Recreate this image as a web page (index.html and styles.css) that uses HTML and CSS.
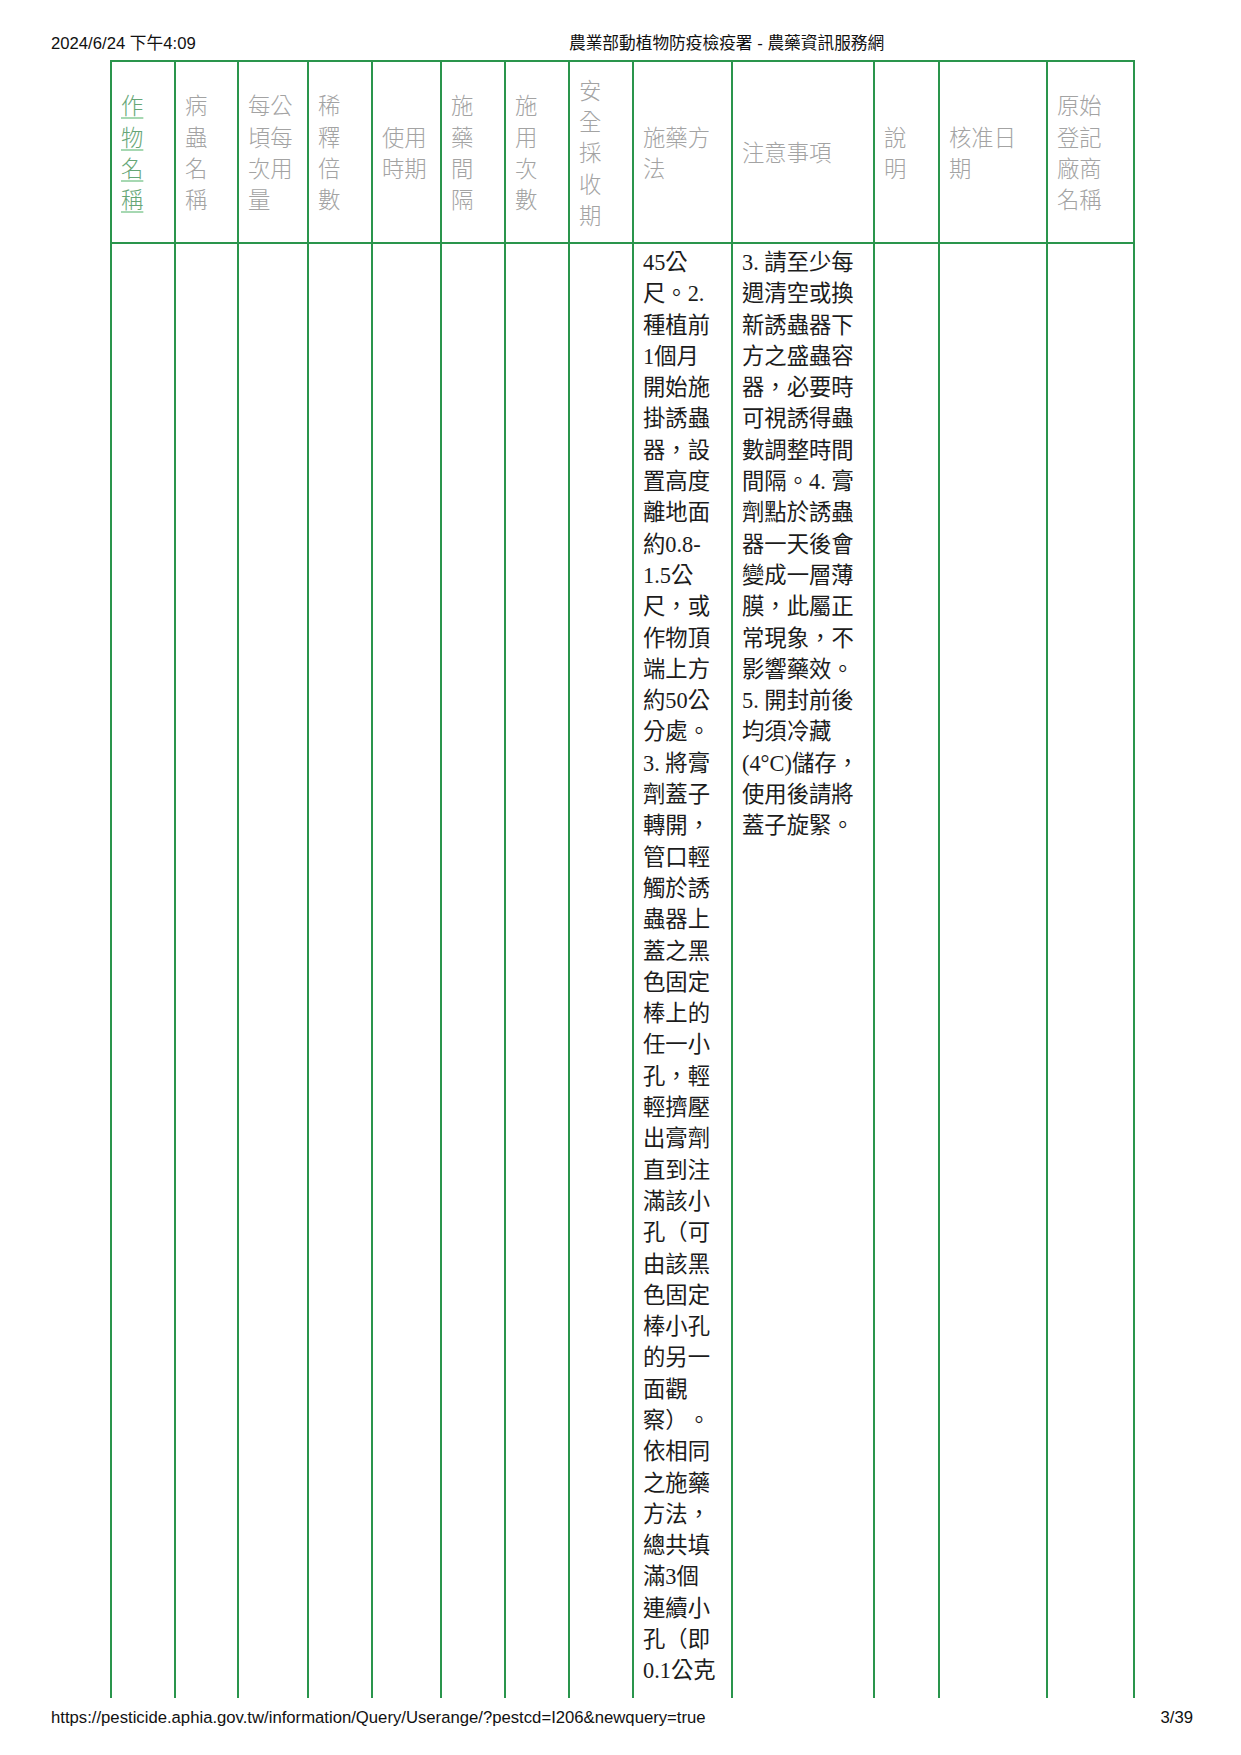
FILE: index.html
```html
<!DOCTYPE html>
<html lang="zh-TW">
<head>
<meta charset="utf-8">
<title>農業部動植物防疫檢疫署 - 農藥資訊服務網</title>
<link rel="stylesheet" href="styles.css">
</head>
<body>
<div class="page">
  <header class="print-head">
    <span class="print-date">2024/6/24 下午4:09</span>
    <span class="print-title">農業部動植物防疫檢疫署 - 農藥資訊服務網</span>
  </header>

  <div class="sheet">
    <div class="cell head"><a class="sort-link" href="#">作<br>物<br>名<br>稱</a></div>
    <div class="cell head">病<br>蟲<br>名<br>稱</div>
    <div class="cell head">每公<br>頃每<br>次用<br>量</div>
    <div class="cell head">稀<br>釋<br>倍<br>數</div>
    <div class="cell head">使用<br>時期</div>
    <div class="cell head">施<br>藥<br>間<br>隔</div>
    <div class="cell head">施<br>用<br>次<br>數</div>
    <div class="cell head">安<br>全<br>採<br>收<br>期</div>
    <div class="cell head">施藥方<br>法</div>
    <div class="cell head">注意事項</div>
    <div class="cell head">說<br>明</div>
    <div class="cell head">核准日<br>期</div>
    <div class="cell head">原始<br>登記<br>廠商<br>名稱</div>

    <div class="cell body"></div>
    <div class="cell body"></div>
    <div class="cell body"></div>
    <div class="cell body"></div>
    <div class="cell body"></div>
    <div class="cell body"></div>
    <div class="cell body"></div>
    <div class="cell body"></div>
    <div class="cell body text">45公<br>尺<span class="pc">。</span>2.<br>種植前<br>1個月<br>開始施<br>掛誘蟲<br>器<span class="pc">，</span>設<br>置高度<br>離地面<br>約0.8-<br>1.5公<br>尺<span class="pc">，</span>或<br>作物頂<br>端上方<br>約50公<br>分處<span class="pc">。</span><br>3. 將膏<br>劑蓋子<br>轉開<span class="pc">，</span><br>管口輕<br>觸於誘<br>蟲器上<br>蓋之黑<br>色固定<br>棒上的<br>任一小<br>孔<span class="pc">，</span>輕<br>輕擠壓<br>出膏劑<br>直到注<br>滿該小<br>孔（可<br>由該黑<br>色固定<br>棒小孔<br>的另一<br>面觀<br>察）<span class="pc">。</span><br>依相同<br>之施藥<br>方法<span class="pc">，</span><br>總共填<br>滿3個<br>連續小<br>孔（即<br>0.1公克</div>
    <div class="cell body text">3. 請至少每<br>週清空或換<br>新誘蟲器下<br>方之盛蟲容<br>器<span class="pc">，</span>必要時<br>可視誘得蟲<br>數調整時間<br>間隔<span class="pc">。</span>4. 膏<br>劑點於誘蟲<br>器一天後會<br>變成一層薄<br>膜<span class="pc">，</span>此屬正<br>常現象<span class="pc">，</span>不<br>影響藥效<span class="pc">。</span><br>5. 開封前後<br>均須冷藏<br>(4°C)儲存<span class="pc">，</span><br>使用後請將<br>蓋子旋緊<span class="pc">。</span></div>
    <div class="cell body"></div>
    <div class="cell body"></div>
    <div class="cell body"></div>
  </div>

  <footer class="print-foot">
    <span class="print-url">https://pesticide.aphia.gov.tw/information/Query/Userange/?pestcd=I206&amp;newquery=true</span>
    <span class="print-page">3/39</span>
  </footer>
</div>
</body>
</html>
```
FILE: styles.css
```css
html, body {
  margin: 0;
  padding: 0;
  background: #ffffff;
}

.page {
  width: 1241px;
  height: 1755px;
  overflow: hidden;
  position: relative;
}

.print-head {
  display: flex;
  height: 60px;
  box-sizing: border-box;
  padding: 35px 0 0 51px;
  font-family: "Liberation Sans", "Noto Sans CJK TC", sans-serif;
  font-size: 16.7px;
  line-height: 18px;
  color: #111;
}

.print-date {
  width: 518px;
  flex: none;
}

.sheet {
  margin-left: 110px;
  width: 1025px;
  box-sizing: border-box;
  display: grid;
  grid-template-columns: 64px 63px 70px 64px 69px 64px 64px 64px 99px 142px 65px 108px 87px;
  grid-template-rows: 182px 1454px;
  border-left: 2px solid #2a954c;
  border-top: 2px solid #2a954c;
}

.cell {
  box-sizing: border-box;
  border-right: 2px solid #2a954c;
  padding: 0 9px;
  font-size: 22.35px;
  line-height: 31.29px;
}

.head {
  border-bottom: 2px solid #2a954c;
  display: flex;
  flex-direction: column;
  justify-content: center;
  font-family: "Noto Sans CJK TC", sans-serif;
  font-weight: 300;
  color: #a3a3a3;
}

.sort-link {
  color: #66a676;
  text-decoration: underline;
  text-decoration-color: #a6d8b2;
  text-decoration-thickness: 2px;
  text-underline-offset: 3px;
}

.body {
  padding-top: 3px;
  font-family: "Liberation Serif", "Noto Sans CJK TC", serif;
  color: #1c1c1c;
}

.pc {
  display: inline-block;
  width: 1em;
  text-align: center;
}

.print-foot {
  display: flex;
  justify-content: space-between;
  width: 1193px;
  box-sizing: border-box;
  padding: 11px 0 0 51px;
  font-family: "Liberation Sans", sans-serif;
  font-size: 16.7px;
  line-height: 18px;
  color: #111;
}
```
